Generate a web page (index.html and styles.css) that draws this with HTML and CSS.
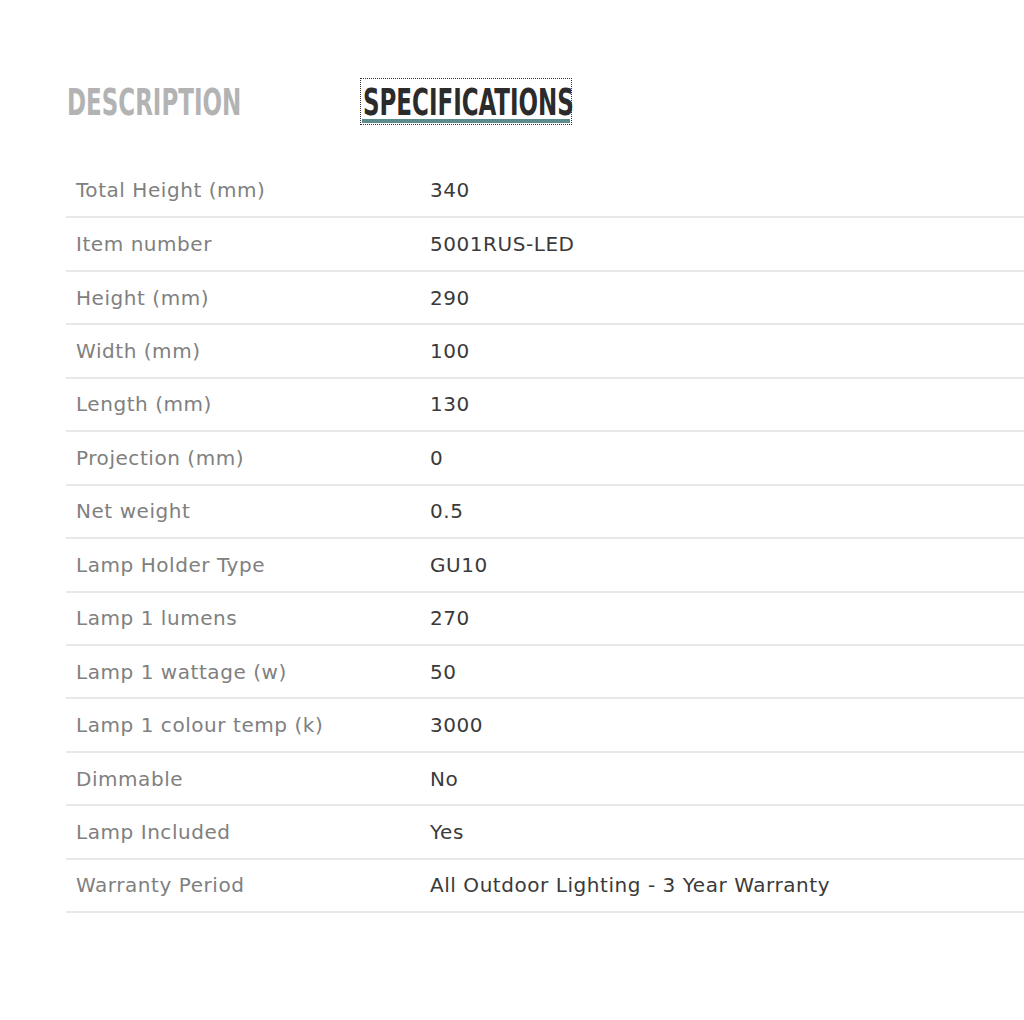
FILE: index.html
```html
<!DOCTYPE html>
<html>
<head>
<meta charset="utf-8">
<link rel="stylesheet" href="styles.css">
</head>
<body>
<div class="page">
  <div class="tabs">
    <a class="tab tab-desc"><span class="tab-text">DESCRIPTION</span></a>
    <a class="tab tab-spec active"><span class="tab-text">SPECIFICATIONS</span></a>
  </div>
  <table class="specs">
    <tr><td class="k">Total Height (mm)</td><td class="v">340</td></tr>
    <tr><td class="k">Item number</td><td class="v">5001RUS-LED</td></tr>
    <tr><td class="k">Height (mm)</td><td class="v">290</td></tr>
    <tr><td class="k">Width (mm)</td><td class="v">100</td></tr>
    <tr><td class="k">Length (mm)</td><td class="v">130</td></tr>
    <tr><td class="k">Projection (mm)</td><td class="v">0</td></tr>
    <tr><td class="k">Net weight</td><td class="v">0.5</td></tr>
    <tr><td class="k">Lamp Holder Type</td><td class="v">GU10</td></tr>
    <tr><td class="k">Lamp 1 lumens</td><td class="v">270</td></tr>
    <tr><td class="k">Lamp 1 wattage (w)</td><td class="v">50</td></tr>
    <tr><td class="k">Lamp 1 colour temp (k)</td><td class="v">3000</td></tr>
    <tr><td class="k">Dimmable</td><td class="v">No</td></tr>
    <tr><td class="k">Lamp Included</td><td class="v">Yes</td></tr>
    <tr><td class="k">Warranty Period</td><td class="v">All Outdoor Lighting - 3 Year Warranty</td></tr>
  </table>
</div>
</body>
</html>
```
FILE: styles.css
```css
html, body { margin: 0; padding: 0; background: #fff; }
body { overflow: hidden; }
.page { padding: 80px 0 0 66px; width: 1000px; }
.tabs {
  display: grid;
  grid-template-columns: 296px auto;
  align-items: start;
  height: 84px;
}
.tab {
  display: block;
  box-sizing: border-box;
  height: 43px;
  padding-top: 6px;
  font-family: "DejaVu Sans", sans-serif;
  font-stretch: condensed;
  font-weight: 700;
  font-size: 37px;
  line-height: 33px;
  color: #b3b3b3;
  white-space: nowrap;
}
.tab-text {
  display: inline-block;
  transform: scaleX(0.69);
  transform-origin: 0 0;
}
.tab-desc { width: 175px; padding-left: 1px; }
.tab-spec {
  width: 208px;
  padding-left: 1px;
  color: #2b2b2b;
  border-bottom: 4px solid #5a8d8c;
  outline: 1px dotted #333;
  outline-offset: 1px;
}
.specs {
  border-collapse: collapse;
  width: 1000px;
  font-family: "DejaVu Sans", sans-serif;
  font-size: 20px;
  letter-spacing: 0.55px;
}
.specs td {
  height: 53.45px;
  padding: 0 10px;
  border-bottom: 2px solid #e8e8e8;
  box-sizing: border-box;
}
.specs .k { width: 354px; color: #808080; }
.specs .v { color: #3a3a3a; }
```
